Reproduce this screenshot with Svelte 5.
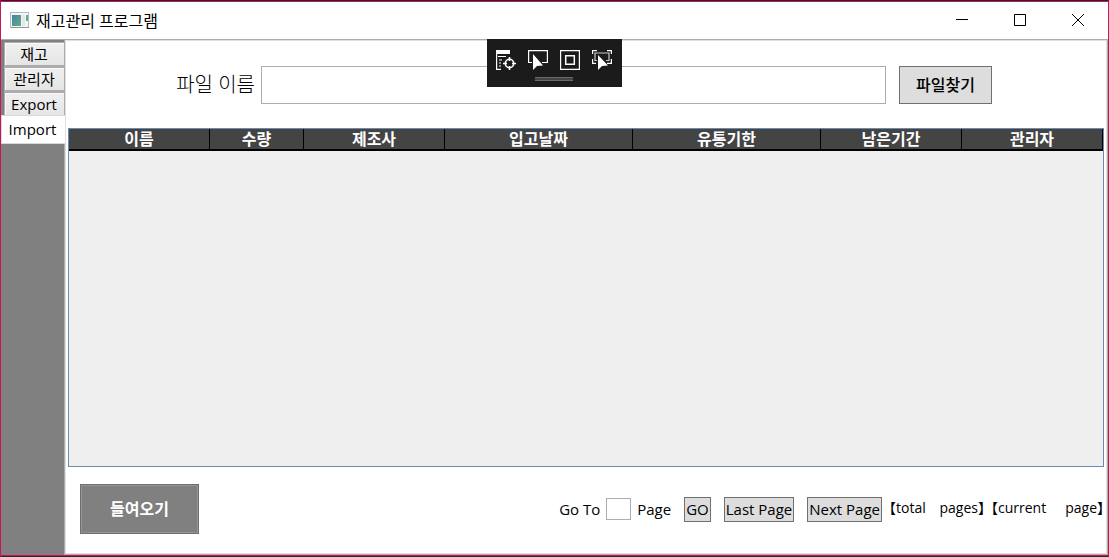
<script lang="ts">
	interface Column {
		label: string;
		share: number;
	}

	const tabs = ['재고', '관리자', 'Export', 'Import'];

	const columns: Column[] = [
		{ label: '이름', share: 3 },
		{ label: '수량', share: 2 },
		{ label: '제조사', share: 3 },
		{ label: '입고날짜', share: 4 },
		{ label: '유통기한', share: 4 },
		{ label: '남은기간', share: 3 },
		{ label: '관리자', share: 3 }
	];

	const total = columns.reduce((sum, column) => sum + column.share, 0);

	let activeTab = $state('Import');
	let fileName = $state('');
	let pageNumber = $state('');
</script>

<div class="window">
	<header class="titlebar">
		<svg class="app-icon" width="20" height="17" viewBox="0 0 20 17" aria-hidden="true">
			<defs>
				<linearGradient id="screen" x1="0" y1="0" x2="1" y2="1">
					<stop offset="0" stop-color="#4a7fa8" />
					<stop offset="1" stop-color="#5fae83" />
				</linearGradient>
			</defs>
			<rect x="0.5" y="0.5" width="18" height="15" fill="#f4f6f7" stroke="#b4b9bf" />
			<path d="M1 15.5h18" stroke="#8e949b" />
			<rect x="2" y="3" width="9" height="11" fill="url(#screen)" />
			<rect x="12" y="3" width="3" height="11" fill="#e3e7ea" />
			<rect x="16" y="3" width="2" height="6" fill="#63ad8d" />
		</svg>
		<h1>재고관리 프로그램</h1>
		<div class="window-controls">
			<button type="button" aria-label="최소화">
				<svg width="12" height="12" viewBox="0 0 12 12"><path d="M0 5.5h12" /></svg>
			</button>
			<button type="button" aria-label="최대화">
				<svg width="12" height="12" viewBox="0 0 12 12"><path d="M.5.5h11v11H.5z" /></svg>
			</button>
			<button type="button" aria-label="닫기">
				<svg width="12" height="12" viewBox="0 0 12 12"><path d="M0 0l12 12M12 0L0 12" /></svg>
			</button>
		</div>
	</header>

	<div class="body">
		<nav class="tabs">
			{#each tabs as tab}
				<button
					type="button"
					class="tab"
					class:is-active={activeTab === tab}
					onclick={() => (activeTab = tab)}
				>
					{tab}
				</button>
			{/each}
		</nav>

		<main class="panel">
			<form class="search" onsubmit={(e) => e.preventDefault()}>
				<label for="file-name">파일 이름</label>
				<input id="file-name" type="text" bind:value={fileName} />
				<button type="button" class="find">파일찾기</button>
			</form>

			<div class="grid">
				<table>
					<thead>
						<tr>
							{#each columns as column}
								<th style="width: {(column.share / total) * 100}%">{column.label}</th>
							{/each}
						</tr>
					</thead>
					<tbody></tbody>
				</table>
			</div>

			<footer class="footer">
				<button type="button" class="import">들여오기</button>
				<div class="pager">
					<label for="page-number">Go To</label>
					<input id="page-number" type="text" bind:value={pageNumber} />
					<span>Page</span>
					<button type="button">GO</button>
					<button type="button">Last Page</button>
					<button type="button">Next Page</button>
					<div class="count total"><span>【total</span> <span>pages】</span></div>
					<div class="count current"><span>【current</span> <span>page】</span></div>
				</div>
			</footer>
		</main>

		<div class="debug-bar">
			<div class="debug-icons">
				<svg width="20" height="20" viewBox="0 0 20 20" aria-hidden="true">
					<path d="M0 0h14v4H0z" fill="#fff" stroke="none" />
					<path d="M.6 4v15.4H5M2 6.5h8M3 10h3M3 13h2M3 16h2" />
					<circle cx="13.5" cy="13.5" r="4.2" stroke-width="1.6" />
					<path d="M13.5 7v4M13.5 16v4M7 13.5h4M16 13.5h4" stroke-width="1.6" />
				</svg>
				<svg width="20" height="20" viewBox="0 0 20 20" aria-hidden="true">
					<path d="M4 12.5H.6V.6h18.8v11.9H14" />
					<path d="M5 4v16l4-4 6-.5z" fill="#fff" stroke="none" />
				</svg>
				<svg width="20" height="20" viewBox="0 0 20 20" aria-hidden="true">
					<path d="M.6.6h18.8v18.8H.6z" />
					<path d="M5.7 5.7h8.6v8.6H5.7z" stroke-width="1.5" />
				</svg>
				<svg width="20" height="20" viewBox="0 0 20 20" aria-hidden="true">
					<path d="M.6 4V.6H5M15 .6h4.4V4M.6 9v4.4H4M15 13.4h4.400V9" />
					<path d="M5 10.5H3V3h14v7.5h-3" stroke="#ccc" />
					<path d="M6 5v15l4-4 6-.5z" fill="#fff" stroke="none" />
				</svg>
			</div>
			<div class="grip"></div>
		</div>
	</div>
</div>

<style>
	:global(body) {
		margin: 0;
	}

	.window {
		box-sizing: border-box;
		min-height: 100vh;
		display: flex;
		flex-direction: column;
		border: 1px solid #c2185b;
		border-top-color: #24252a;
		border-bottom-color: #33262e;
		box-shadow:
			inset 0 1px #c2185b,
			inset 0 -1px #c2185b;
		padding: 1px 0;
		background: #fff;
		color: #000;
		font-family: 'Open Sans', 'Noto Sans CJK KR', sans-serif;
		font-size: 15px;
		line-height: 20px;
	}

	button,
	input {
		box-sizing: border-box;
		margin: 0;
		padding: 0;
		border-radius: 0;
		font: inherit;
		color: inherit;
	}

	.titlebar {
		display: flex;
		align-items: center;
		height: 37px;
		padding: 0 1px 0 9px;
	}

	.titlebar h1 {
		margin: 0 0 0 6px;
		font-size: 16px;
		font-weight: 400;
	}

	.window-controls {
		display: flex;
		align-self: stretch;
		margin-left: auto;
	}

	.window-controls button {
		display: flex;
		align-items: center;
		justify-content: center;
		width: 58px;
		padding-bottom: 1px;
		border: 0;
		background: none;
	}

	.window-controls path {
		fill: none;
		stroke: #000;
	}

	.body {
		position: relative;
		display: flex;
		flex: 1;
	}

	.tabs {
		box-sizing: border-box;
		display: flex;
		flex-direction: column;
		width: 63px;
		padding: 2px 0 0 3px;
		border-top: 1px solid #acacac;
		background: #808080;
	}

	.tab {
		height: 25px;
		padding: 0 1px 1px 0;
		border: 2px solid #acacac;
		border-width: 1px 0 2px 1px;
		background: linear-gradient(#f0f0f0, #e5e5e5);
		box-shadow: inset 1px 1px #fafafa;
	}

	.tab.is-active {
		z-index: 1;
		height: 29px;
		margin: -2px -1px 0 -3px;
		padding-right: 2px;
		border: 1px solid #d9d9d9;
		border-right: 0;
		background: #fff;
		box-shadow: none;
	}

	.panel {
		box-sizing: border-box;
		display: flex;
		flex: 1;
		flex-direction: column;
		min-width: 0;
		padding: 0 3px;
		border: 1px solid #acacac;
		box-shadow: inset 0 0 0 1px #e0e0e0;
	}

	.search {
		display: grid;
		grid-template-columns: 187fr 631fr 106fr 112fr;
		align-items: center;
		box-sizing: border-box;
		height: 88px;
		padding-top: 2px;
	}

	.search label {
		font-size: 20px;
		font-weight: 300;
		line-height: 28px;
		text-align: right;
	}

	.search input {
		height: 38px;
		margin-left: 6px;
		border: 1px solid #abadb3;
		background: #fff;
		padding: 0 6px;
	}

	.search .find {
		height: 38px;
		margin-left: 13px;
		border: 1px solid #707070;
		background: #ddd;
		font-size: 16px;
		font-weight: 500;
	}

	.grid {
		flex: 1;
		border: 1px solid #688caf;
		background: #efefef;
	}

	table {
		width: 100%;
		border-collapse: separate;
		border-spacing: 0;
		table-layout: fixed;
	}

	th {
		box-sizing: border-box;
		height: 22px;
		padding: 0;
		border-right: 1px solid #000;
		border-bottom: 2px solid #000;
		background: #444;
		color: #fff;
		font-size: 16px;
		font-weight: 700;
		line-height: 20px;
	}

	.footer {
		display: flex;
		align-items: center;
		justify-content: space-between;
		box-sizing: border-box;
		height: 87px;
		padding: 0 0 3px 12px;
	}

	.import {
		width: 119px;
		height: 50px;
		border: 1px solid #707070;
		background: #808080;
		box-shadow: inset 0 0 0 1px #939393;
		color: #fff;
		font-size: 16px;
		font-weight: 700;
	}

	.pager {
		display: flex;
		align-items: center;
	}

	.pager input {
		width: 25px;
		height: 22px;
		margin: 0 6px;
		border: 1px solid #abadb3;
	}

	.pager button {
		height: 25px;
		margin-left: 13px;
		padding: 0 1px;
		border: 1px solid #707070;
		background: #ddd;
		white-space: nowrap;
	}

	.count {
		display: flex;
		justify-content: space-between;
		padding-bottom: 3px;
		font-size: 14px;
		font-feature-settings: 'halt';
		white-space: nowrap;
	}

	.total {
		width: 96px;
		margin-left: 7px;
	}

	.current {
		width: 113px;
		margin-left: 6px;
	}

	.debug-bar {
		position: absolute;
		top: 0;
		left: 50%;
		width: 135px;
		height: 48px;
		box-sizing: border-box;
		margin-left: -68px;
		padding-top: 11px;
		background: #1b1b1c;
	}

	.debug-icons {
		display: flex;
		justify-content: center;
		gap: 12px;
	}

	.debug-icons svg {
		fill: none;
		stroke: #fff;
		stroke-width: 1.2;
	}

	.grip {
		width: 38px;
		height: 2px;
		margin: 7px auto 0;
		border: 1px solid #686868;
		border-width: 1px 0;
		background: #444;
	}
</style>
